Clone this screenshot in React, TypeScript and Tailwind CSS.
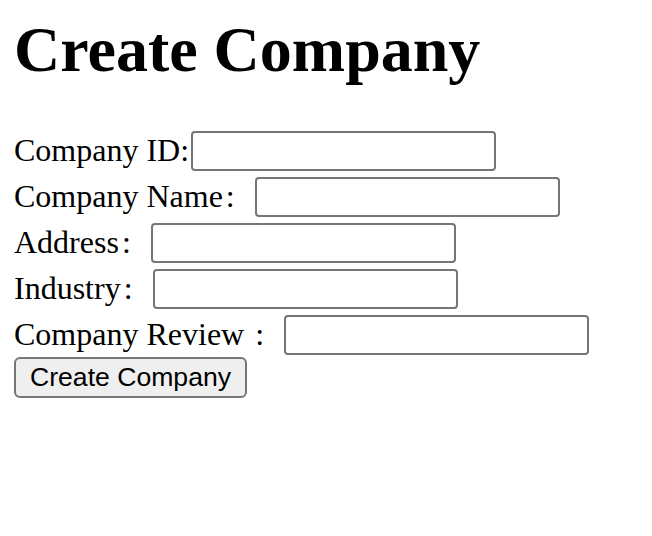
import React from "react";

const serif = { fontFamily: '"Liberation Serif", "Noto Sans CJK SC", serif' };

function Colon() {
  return <span className="inline-block w-[32px] pl-[3px]">:</span>;
}

function Row({ label, last = false }: { label: string; last?: boolean }) {
  return (
    <div className={`flex items-start ${last ? "h-[42px]" : "h-[46px]"}`}>
      <span className="whitespace-pre text-[32px] leading-[38px] text-black">
        {label}
        <Colon />
      </span>
      <input
        type="text"
        className="box-border h-[40px] w-[305px] rounded-[4px] border-2 border-[#767676] bg-white"
      />
    </div>
  );
}

export default function App() {
  return (
    <div className="min-h-[536px] w-full bg-white pl-[14px] text-black" style={serif}>
      <h1 className="pt-[13px] text-[64px] font-bold leading-[74px]">Create Company</h1>
      <form className="mt-[44px]" onSubmit={(e) => e.preventDefault()}>
        <div className="flex h-[46px] items-start">
          <span className="whitespace-pre text-[32px] leading-[38px]">Company ID:</span>
          <input
            type="text"
            className="ml-[2px] box-border h-[40px] w-[305px] rounded-[4px] border-2 border-[#767676] bg-white"
          />
        </div>
        <Row label="Company Name" />
        <Row label="Address" />
        <Row label="Industry" />
        <Row label="Company Review " last />
        <button
          type="submit"
          className="box-border flex h-[41px] w-[233px] items-center justify-center rounded-[6px] border-2 border-[#767676] bg-[#efefef] text-[26.6px] text-black"
          style={{ fontFamily: '"Liberation Sans", Arial, sans-serif' }}
        >
          Create Company
        </button>
      </form>
    </div>
  );
}
